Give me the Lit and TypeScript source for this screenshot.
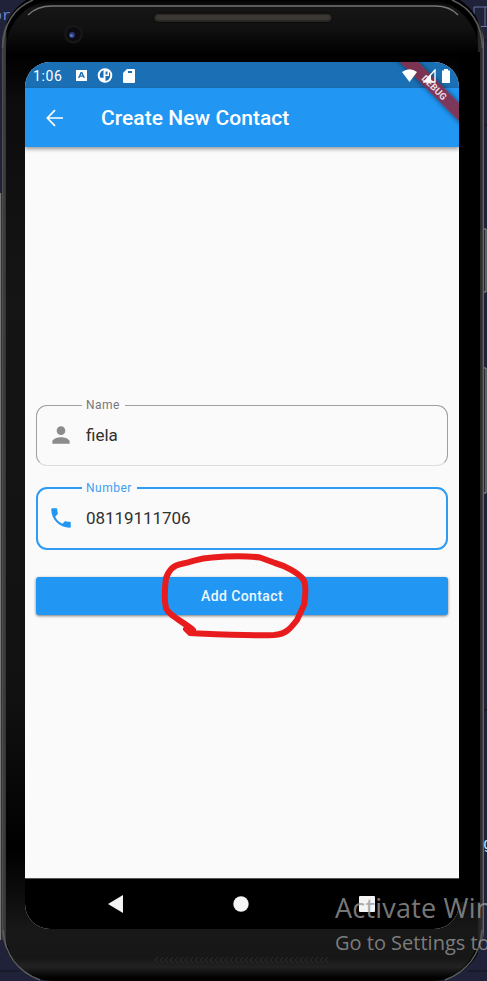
import { LitElement, html, css, svg } from "lit";
import { customElement, property } from "lit/decorators.js";

@customElement("outlined-field")
class OutlinedField extends LitElement {
  @property() label = "";
  @property() value = "";
  @property() icon = "person";
  @property({ type: Boolean, reflect: true }) focused = false;

  static styles = css`
    :host { display: block; height: 68px; color: #8c8c8c; font-family: Roboto, sans-serif; }
    fieldset {
      box-sizing: border-box; height: 68px; margin: 0; padding: 0 0 0 11px;
      border: 1px solid #a0a0a0; border-bottom-color: #dedede; border-radius: 11px;
    }
    legend {
      margin-left: 34px; padding: 0 5px 0 4px; height: 14px; box-sizing: border-box;
      font-size: 12px; line-height: 14px; letter-spacing: .5px; color: #777;
    }
    .row { display: flex; align-items: center; height: 45px; gap: 12px; }
    .value { font-size: 17px; letter-spacing: 0; color: #303030; line-height: 24px; }
    svg { width: 26px; height: 26px; fill: currentColor; display: block; }
    :host([focused]) { color: #2196f3; }
    :host([focused]) fieldset { height: 69px; border: 2.5px solid #2f9bf3; padding-left: 10px; }
    :host([focused]) legend { color: #3c9ff3; margin-left: 34px; letter-spacing: .5px; }
    :host([focused]) .value { letter-spacing: -.05px; }
  `;

  render() {
    const path = this.icon === "phone"
      ? svg`<path d="M6.62 10.79c1.44 2.83 3.76 5.14 6.59 6.59l2.2-2.2c.27-.27.67-.36 1.02-.24 1.12.37 2.33.57 3.57.57.55 0 1 .45 1 1V20c0 .55-.45 1-1 1-9.39 0-17-7.61-17-17 0-.55.45-1 1-1h3.500c.55 0 1 .45 1 1 0 1.250.2 2.450.57 3.570.11.350.030.74-.25 1.020l-2.200 2.200z"/>`
      : svg`<path d="M12 12c2.210 0 4-1.790 4-4s-1.790-4-4-4-4 1.790-4 4 1.790 4 4 4zm0 2c-2.670 0-8 1.340-8 4v2h16v-2c0-2.660-5.330-4-8-4z"/>`;
    return html`<fieldset>
      <legend>${this.label}</legend>
      <div class="row"><svg viewBox="0 0 24 24">${path}</svg><span class="value">${this.value}</span></div>
    </fieldset>`;
  }
}

@customElement("app-root")
class AppRoot extends LitElement {
  static styles = css`
    :host {
      display: block; position: relative; width: 487px; height: 981px; overflow: hidden;
      background: #20223a; font-family: Roboto, sans-serif;
    }
    .desk { position: absolute; inset: 0; width: 487px; height: 981px; }
    .phone {
      position: relative; box-sizing: border-box; width: 482px; height: 989px;
      margin: -8px 0 0 2px; padding: 70px 23px 0; border-radius: 52px;
      background: linear-gradient(90deg, #555 0, #343434 2px, #444 3px, #242424 4px, #000 5px, #000 475px, #222 476px, #303030 480px, #777 482px);
    }
    .face {
      position: absolute; left: 4px; top: 8px; width: 472px; height: 980px; border-radius: 50px 50px 46px 46px;
      background: linear-gradient(#000 0, #161616 8px, #111 28px, #000 54px, #0c0c0c 100px, #151515 300px, #111 700px, #000 850px, #111 910px, #181818 930px, #171717 958px, #222 967px, #101010 973px, #000 978px);
    }
    .right-side { position: absolute; right: 4px; top: 60px; width: 21px; height: 850px; background: #000; }
    .hardware { position: absolute; left: 0; top: 0; width: 487px; height: 981px; }
    .screen {
      position: relative; display: flex; flex-direction: column; width: 434px; height: 867px;
      overflow: hidden; border-radius: 25px; background: #fafafa;
    }
    .status {
      flex: none; display: flex; align-items: center; height: 26px; box-sizing: border-box;
      padding: 1px 9px 0 8px; background: #1b70b5; color: #fff; font-size: 14px;
    }
    .time { width: 34px; letter-spacing: .6px; margin-right: 5px; }
    .status svg { display: block; fill: #fff; }
    .left { flex: 1; display: flex; align-items: center; gap: 10px; }
    .time + svg { margin-left: -6px; }
    .right { position: relative; z-index: 2; display: flex; align-items: center; gap: 6px; }
    .bar {
      flex: none; position: relative; display: flex; align-items: center; height: 59px; padding-left: 21px;
      gap: 38px; background: #2196f3; color: #fff; box-shadow: 0 2px 4px #0006;
    }
    .bar svg { display: block; width: 17px; height: 18px; }
    .title { font-size: 21px; font-weight: 500; letter-spacing: .05px; line-height: 26px; padding-top: 1px; }
    .form { flex: 1; display: flex; flex-direction: column; padding: 251px 11px 0; }
    .second { margin-top: 15px; }
    .add {
      display: flex; align-items: center; justify-content: center; height: 38px; margin-top: 28px;
      border: 0; padding: 0; border-radius: 3px; background: #2196f3; color: #eef8ff;
      font: 500 14px Roboto, sans-serif; letter-spacing: .4px; box-shadow: 0 1px 3px #0008;
    }
    .nav {
      flex: none; box-sizing: border-box; height: 51px; border-top: 1px solid #555; background: #000;
      display: flex; align-items: center; justify-content: space-between; padding: 0 84px 0 83px;
    }
    .nav svg { display: block; fill: #f4f4f4; }
    .ribbon { position: absolute; right: 0; top: 0; width: 70px; height: 70px; overflow: hidden; z-index: 1; }
    .ribbon span {
      position: absolute; left: -7px; top: 19px; width: 105px; height: 13px; transform: rotate(45deg);
      background: #8b2942dd; color: #eadde2; box-shadow: 0 0 5px #0008; text-align: center;
      font: 700 9.500px/13px Roboto, sans-serif; letter-spacing: .1px;
    }
    .mark { position: absolute; left: 335px; top: 889px; color: #989898cc; white-space: nowrap; font-family: "Open Sans", "Noto Sans", sans-serif; }
    .big { font-size: 27px; line-height: 38px; letter-spacing: .2px; }
    .small { font-size: 20px; line-height: 31px; letter-spacing: 0; }
    .circle { position: absolute; left: 150px; top: 541px; width: 170px; height: 110px; fill: none; stroke: #e81b1d; stroke-width: 6; stroke-linecap: round; stroke-linejoin: round; }
    .editor { position: absolute; left: -7px; top: 8px; font: 15px "Liberation Mono", monospace; color: #6686d5; }
    .code { position: absolute; left: 483px; top: 836px; font: 16px "Liberation Mono", monospace; color: #bfe0ff; }
  `;

  render() {
    return html`
      <svg class="desk" viewBox="0 0 487 981">
        <path d="M474 27V7H487M485 7v19M474 26.500H487" fill="none" stroke="#6974a5"/>
        <path d="M0 193h5v747H0z" fill="#777"/><path d="M1 193h4v747H1z" fill="#333"/>
        <path d="M482 229h4v63h-4zM482 368h4v125h-4z" fill="#292929" stroke="#999"/>
        <path d="M484 40h3M484 125h3M484 710h3M0 971h20M468 971h19" stroke="#11121e"/>
      </svg>
      <span class="editor">or</span>
      <div class="phone">
        <div class="face"></div><div class="right-side"></div>
        <div class="screen">
          <div class="status">
            <div class="left">
              <span class="time">1:06</span>
              <svg width="11" height="11" viewBox="0 0 11 11"><path fill-rule="evenodd" d="M0 0h11v11H0zM4.600 2 2 8h1.500l.5-1.300h3l.7 1.300H9L6.300 2zm.8 1.500.9 2.100H4.700z"/></svg>
              <svg width="16" height="15" viewBox="0 0 16 15"><path fill-rule="evenodd" d="M8 .2a7.300 7.300 0 1 1 0 14.600A7.300 7.300 0 0 1 8 .2zM6.500 2A6 6 0 0 0 3 9.500l3.500.5zM8.500 8v5A5.800 5.800 0 0 0 12 3.500V8zM8.500 3.500v3h2v-3z"/></svg>
              <svg width="12" height="14" viewBox="0 0 12 14"><path fill-rule="evenodd" d="M4 0h7q1 0 1 1v12q0 1-1 1H1q-1 0-1-1V4zM5 2v2h4V2z"/></svg>
            </div>
            <div class="right">
              <svg width="15" height="13" viewBox="0 0 15 13"><path d="M0 3Q7.500-2.500 15 3L7.500 13z"/></svg>
              <svg width="13" height="14" viewBox="0 0 13 14"><path d="M1 13 12 1V13z" fill="none" stroke="#fff" stroke-width="1.400"/><path d="M1 13 8 5v8z"/></svg>
              <svg width="8" height="14" viewBox="0 0 8 14"><path d="M2 0h4v1.500H8V14H0V1.500h2z"/></svg>
            </div>
          </div>
          <div class="bar">
            <svg viewBox="0 0 17 18" fill="none" stroke="#fff" stroke-width="1.700"><path d="M17 9H1.500M9 1.200 1.300 9 9 16.800"/></svg>
            <span class="title">Create New Contact</span>
          </div>
          <div class="form">
            <outlined-field label="Name" value="fiela"></outlined-field>
            <outlined-field class="second" label="Number" value="08119111706" icon="phone" focused></outlined-field>
            <button class="add">Add Contact</button>
          </div>
          <div class="nav">
            <svg width="15" height="18" viewBox="0 0 15 18"><path d="M0 9 15 0v18z"/></svg>
            <svg width="16" height="16" viewBox="0 0 16 16"><circle cx="8" cy="8" r="7.700"/></svg>
            <svg width="16" height="16" viewBox="0 0 16 16"><rect width="16" height="16" rx="1"/></svg>
          </div>
          <div class="ribbon"><span>DEBUG</span></div>
        </div>
      </div>
      <span class="code">g</span>
      <svg class="hardware" viewBox="0 0 487 981">
        <defs>
          <pattern id="mesh" width="5" height="6" patternUnits="userSpaceOnUse"><path d="M0 0l3 3-3 3" fill="none" stroke="#302d28"/></pattern>
        </defs>
        <path d="M28 15Q37 6 52 6H435Q450 6 458 15" fill="none" stroke="#777" stroke-width="1.600"/>
        <path d="M2.500 48Q4 12 33 0M482.500 48Q481 12 452 0M3 930Q6 967 40 980M482 930Q479 967 445 980" fill="none" stroke="#5c5c5c" stroke-width="1.500"/>
        <rect x="153.500" y="13" width="179" height="9.500" rx="4.700" fill="#292724" stroke="#090909"/>
        <rect x="156" y="15" width="174" height="5" rx="2.500" fill="#3b3732"/>
        <circle cx="73.500" cy="34" r="9.500" fill="#171719"/><circle cx="73.500" cy="34" r="7" fill="#0b0b10"/>
        <circle cx="72" cy="35" r="3" fill="#29366f"/><circle cx="71.500" cy="35.500" r="1.500" fill="#5878cf"/>
        <rect x="154" y="957" width="174" height="6" fill="url(#mesh)"/>
      </svg>
      <svg class="circle" viewBox="150 540 170 110"><path d="M193 629C184 621 169 615 166 607C164 599 165 585 166 577C169 569 174 564 181 563C196 560 198 557 212 556.500C229 555 248 555 260 556.500L275 562C286 565 298 572 303 578C307 584 305 598 304 604L297 619C290 628 286 633 274 634C251 635 213 633 190 632L186 628"/></svg>
      <div class="mark"><div class="big">Activate Windows</div><div class="small">Go to Settings to activate Windows.</div></div>
    `;
  }
}
